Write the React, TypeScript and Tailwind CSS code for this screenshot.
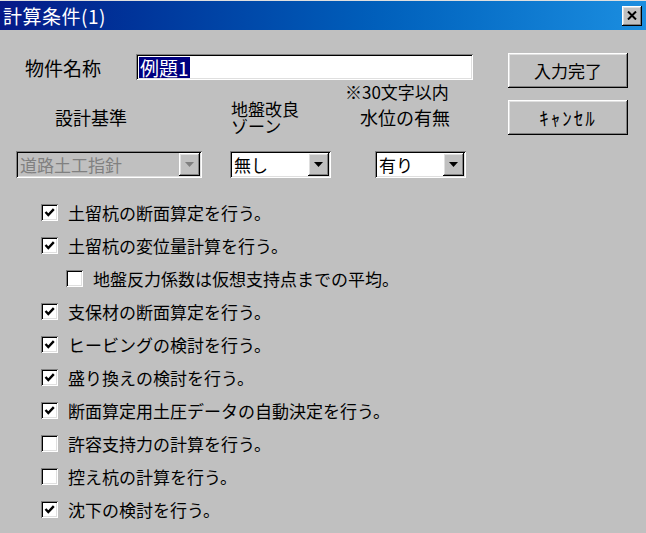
import React from "react";

const raised =
  "shadow-[inset_-1px_-1px_0_#000000,inset_1px_1px_0_#ffffff,inset_-2px_-2px_0_#808080,inset_2px_2px_0_#dfdfdf]";
const sunken =
  "shadow-[inset_1px_1px_0_#808080,inset_-1px_-1px_0_#ffffff,inset_2px_2px_0_#000000,inset_-2px_-2px_0_#dfdfdf]";

function Combo({ value, width, disabled }: { value: string; width: string; disabled?: boolean }) {
  return (
    <div
      className={`${width} h-[27px] flex items-stretch p-[2px] ${sunken} ${
        disabled ? "bg-[#c0c0c0]" : "bg-white"
      }`}
    >
      <div
        className={`flex-1 flex items-center pl-[2px] text-[17px] leading-none overflow-hidden whitespace-nowrap ${
          disabled ? "text-[#808080]" : "text-black"
        }`}
      >
        {value}
      </div>
      <div className={`w-[21px] flex items-center justify-center bg-[#c0c0c0] ${raised}`}>
        <svg width="9" height="5" viewBox="0 0 9 5">
          <polygon points="0,0 9,0 4.5,5" fill={disabled ? "#808080" : "#000000"} />
        </svg>
      </div>
    </div>
  );
}

function Check({ label, checked, indent }: { label: string; checked: boolean; indent?: boolean }) {
  return (
    <div className={`h-[33px] flex items-center ${indent ? "pl-[66px]" : "pl-[41px]"}`}>
      <div className={`w-[17px] h-[17px] bg-white flex items-center justify-center ${sunken}`}>
        {checked && (
          <svg width="11" height="11" viewBox="0 0 11 11">
            <path d="M1.5 5 L4.3 8 L9.8 2.2" stroke="#000" strokeWidth="2.4" fill="none" />
          </svg>
        )}
      </div>
      <span className="ml-[10px] text-[17px] leading-none text-black whitespace-nowrap">{label}</span>
    </div>
  );
}

export default function App() {
  const items: { label: string; checked: boolean; indent?: boolean }[] = [
    { label: "土留杭の断面算定を行う。", checked: true },
    { label: "土留杭の変位量計算を行う。", checked: true },
    { label: "地盤反力係数は仮想支持点までの平均。", checked: false, indent: true },
    { label: "支保材の断面算定を行う。", checked: true },
    { label: "ヒービングの検討を行う。", checked: true },
    { label: "盛り換えの検討を行う。", checked: true },
    { label: "断面算定用土圧データの自動決定を行う。", checked: true },
    { label: "許容支持力の計算を行う。", checked: false },
    { label: "控え杭の計算を行う。", checked: false },
    { label: "沈下の検討を行う。", checked: true },
  ];

  return (
    <div className="w-[646px] h-[533px] bg-[#c0c0c0] overflow-hidden flex flex-col font-['Noto_Sans_CJK_JP','MS_UI_Gothic',sans-serif]">
      {/* Title bar */}
      <div className="h-[30px] shrink-0 border-t border-[#dfdfdf] flex items-center justify-between pl-[3px] pr-[4px] bg-linear-to-r from-[#061888] to-[#1b8ee0]">
        <span className="text-white text-[19px] leading-none whitespace-nowrap tracking-[0.5px]">計算条件(1)</span>
        <div className={`w-[20px] h-[20px] bg-[#c0c0c0] flex items-center justify-center ${raised}`}>
          <svg width="10" height="9" viewBox="0 0 10 9">
            <path d="M1 0.5 L9 8.5 M9 0.5 L1 8.5" stroke="#000" strokeWidth="2" />
          </svg>
        </div>
      </div>

      {/* Top section */}
      <div className="flex pt-[23px]">
        <div className="w-[508px] flex flex-col">
          <div className="flex items-center h-[26px] mt-[1px]">
            <span className="ml-[25px] w-[111px] text-[19px] leading-none text-black whitespace-nowrap">
              物件名称
            </span>
            <div className={`w-[337px] h-[26px] bg-white flex items-center pl-[3px] ${sunken}`}>
              <span className="bg-[#000080] text-white text-[19px] leading-[21px] px-[1px]">例題1</span>
            </div>
          </div>
          <div className="ml-[345px] mt-[4px] h-[16px] text-[17px] leading-[16px] text-black whitespace-nowrap">
            ※30文字以内
          </div>
          <div className="flex ml-[16px]">
            <div className="w-[186px] flex flex-col">
              <div className="h-[51px]">
                <div className="mt-[8px] ml-[39px] text-[18px] leading-[18px] text-black whitespace-nowrap">
                  設計基準
                </div>
              </div>
              <Combo value="道路土工指針" width="w-[186px]" disabled />
            </div>
            <div className="ml-[28px] w-[101px] flex flex-col">
              <div className="h-[51px] flex flex-col">
                <div className="ml-[1px] text-[17px] leading-[17px] h-[17px] text-black whitespace-nowrap">
                  地盤改良
                </div>
                <div className="ml-[1px] text-[17px] leading-[17px] h-[17px] text-black whitespace-nowrap">
                  ゾーン
                </div>
              </div>
              <Combo value="無し" width="w-[101px]" />
            </div>
            <div className="ml-[44px] w-[91px] flex flex-col">
              <div className="h-[51px]">
                <div className="mt-[8px] -ml-[15px] text-[18px] leading-[18px] text-black whitespace-nowrap">
                  水位の有無
                </div>
              </div>
              <Combo value="有り" width="w-[91px]" />
            </div>
          </div>
        </div>
        <div className="w-[120px] flex flex-col gap-[12px]">
          <div
            className={`h-[35px] bg-[#c0c0c0] flex items-center justify-center text-[17px] leading-none text-black ${raised}`}
          >
            入力完了
          </div>
          <div
            className={`h-[35px] bg-[#c0c0c0] flex items-center justify-center text-[19px] leading-none tracking-[2px] text-black ${raised}`}
          >
            ｷｬﾝｾﾙ
          </div>
        </div>
      </div>

      {/* Checkboxes */}
      <div className="mt-[18px] flex flex-col">
        {items.map((it, i) => (
          <Check key={i} label={it.label} checked={it.checked} indent={it.indent} />
        ))}
      </div>
    </div>
  );
}
